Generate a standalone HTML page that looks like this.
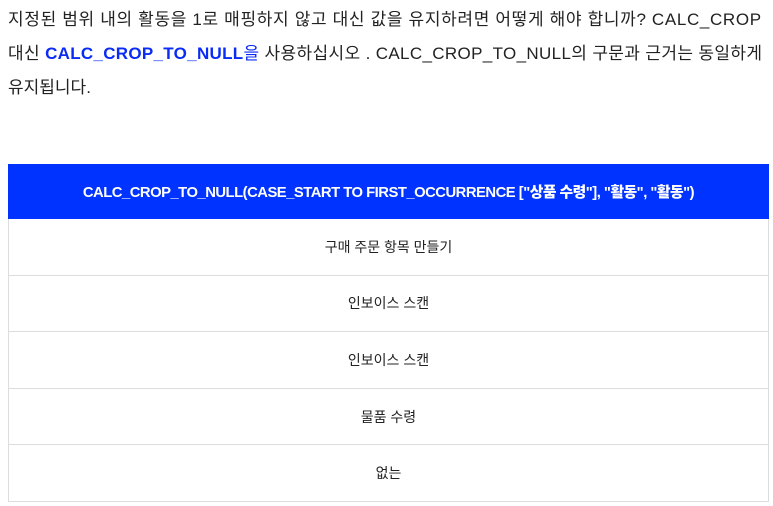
<!DOCTYPE html>
<html><head><meta charset="utf-8"><style>
body{margin:0;background:#fff;font-family:"Liberation Sans","Noto Sans CJK KR",sans-serif;color:#222;}
p{position:absolute;left:8px;top:3px;width:770px;margin:0;font-size:17px;line-height:34px;white-space:nowrap;}
b{color:#0a2cf5;font-weight:900;letter-spacing:0.3px;}
table{position:absolute;left:8px;top:164px;width:761px;border-collapse:collapse;}
td,th{border:1px solid #ddd;text-align:center;font-size:14px;height:55.6px;padding:0;}
th{background:#0033ff;color:#fff;height:53px;font-weight:900;letter-spacing:-0.5px;font-size:14.8px;border-color:#0033ff;}
</style></head><body>
<p><span style="letter-spacing:0.65px">지정된 범위 내의 활동을 1로 매핑하지 않고 대신 값을 유지하려면 어떻게 해야 합니까? CALC_CROP</span><br><span style="letter-spacing:0.35px">대신 <b>CALC_CROP_TO_NULL</b><span style="color:#0a2cf5">을</span> 사용하십시오 . CALC_CROP_TO_NULL의 구문과 근거는 동일하게</span><br>유지됩니다.</p>
<table>
<tr><th>CALC_CROP_TO_NULL(CASE_START TO FIRST_OCCURRENCE ["상품 수령"], "활동", "활동")</th></tr>
<tr><td>구매 주문 항목 만들기</td></tr>
<tr><td>인보이스 스캔</td></tr>
<tr><td>인보이스 스캔</td></tr>
<tr><td>물품 수령</td></tr>
<tr><td>없는</td></tr>
</table>
</body></html>
